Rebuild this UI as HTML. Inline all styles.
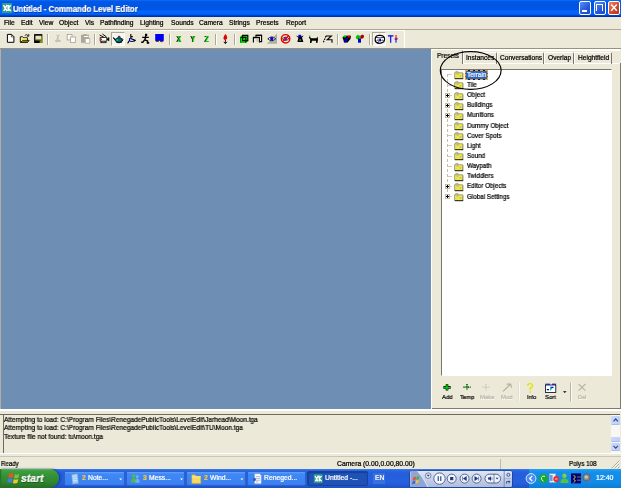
<!DOCTYPE html>
<html><head><meta charset="utf-8"><title>Untitled - Commando Level Editor</title>
<style>
html,body{margin:0;padding:0;}
body{width:622px;height:488px;overflow:hidden;background:#fff;position:relative;font-family:"Liberation Sans",sans-serif;font-size:7px;color:#000;}
.a{position:absolute;}
.t{position:absolute;white-space:nowrap;line-height:8px;height:8px;-webkit-text-stroke:0.22px currentColor;will-change:transform;}
svg{position:absolute;overflow:visible;}
#win{left:0;top:0;width:621px;height:469px;background:#ECE9D8;}
#title{left:0;top:0;width:621px;height:16.6px;background:linear-gradient(#1070f4 0,#0059ea 1.2px,#0055e2 5px,#0057e6 9.5px,#0066ff 11.5px,#0065fc 14px,#0048d0 15.2px,#0032b4 16.2px,#0030b0 16.6px);}
#ttext{left:13px;top:3.5px;font-size:8.4px;transform:scaleX(0.924);transform-origin:0 0;font-weight:bold;color:#fff;line-height:10px;height:10px;text-shadow:0.5px 0.5px 0 #0a2e8a;}
.cb{position:absolute;top:1.4px;width:12px;height:13.6px;border:0.8px solid #fff;border-radius:2px;box-sizing:border-box;background:linear-gradient(135deg,#5c8ff5,#2457d8 60%,#1c4cc8);}
#view{left:1px;top:49px;width:430px;height:360.5px;background:#6E8FB3;}
#task{left:0;top:469px;width:621px;height:19px;background:linear-gradient(#3a80f0 0,#2a68e4 1.5px,#245edc 4px,#2560de 14px,#1e50c4 19px);}
.m{top:18.5px;font-size:6.7px;}
.xyz{top:34.9px;font-size:8.2px;transform:scaleX(0.82);transform-origin:0 0;font-weight:bold;color:#00d400;text-shadow:-0.9px 0 0 #000;-webkit-text-stroke:0;line-height:9px;height:9px;}
.tab{top:51.6px;height:12px;box-sizing:border-box;border:1px solid #fff;border-right-color:#7a786c;border-bottom:0;border-radius:1.5px 1.5px 0 0;}
.tb{top:54.4px;font-size:6.6px;}
.tr{font-size:6.9px;transform:scaleX(0.91);transform-origin:0 0;}
.bl{top:393.3px;font-size:6.2px;transform:scaleX(0.95);transform-origin:0 0;}
.pl{width:5.4px;height:5.4px;box-sizing:border-box;border:0.8px solid #c0b8a0;background:#fff;}
.lg{font-size:7.2px;transform:scaleX(0.91);transform-origin:0 0;}
.st{top:460.3px;font-size:6.8px;transform-origin:0 0;}
.sb{width:9.2px;box-sizing:border-box;background:linear-gradient(90deg,#cad9fd,#bccffb);border-radius:1.2px;border-bottom:0.6px solid #a9bdf0;}
.tk{top:470.6px;height:15.6px;box-sizing:border-box;background:linear-gradient(#64a2fa 0,#4088f6 2px,#3c82f2 11px,#3478e8 15px);border:0.6px solid #2c62d0;border-radius:1.6px;}
.tt{top:474.4px;font-size:6.8px;color:#fff;}
.sep{position:absolute;top:34px;width:1px;height:10.5px;background:#ACA899;box-shadow:1px 0 0 #fff;}
</style></head><body>
<div class="a" id="win"></div>

<!-- TITLE BAR -->
<div class="a" id="title"></div>
<div class="a" style="left:1.5px;top:3px;width:10px;height:10px;background:#2f9a8e;"></div>
<svg style="left:1.5px;top:3px" width="10" height="10" viewBox="0 0 10 10"><path d="M1.5 2.2 L5 8 M5.2 1.8 L1.8 8 M6.2 2 V8 M6.2 5 L8.7 2.2 M6.2 5 L8.8 8" stroke="#fff" stroke-width="1.5" fill="none"/></svg>
<div class="t" id="ttext">Untitled - Commando Level Editor</div>
<div class="cb" style="left:579.4px;"></div>
<div class="a" style="left:582.4px;top:10.2px;width:4.4px;height:1.6px;background:#fff;"></div>
<div class="cb" style="left:593.7px;"></div>
<div class="a" style="left:595.8px;top:4.2px;width:7.4px;height:6.8px;box-sizing:border-box;border:1.1px solid #fff;border-top-width:1.9px;border-bottom:0;"></div>
<div class="cb" style="left:607.5px;background:linear-gradient(135deg,#e8896b,#d6482a 55%,#b93315);"></div>
<svg style="left:607.5px;top:1.4px" width="12" height="13.6" viewBox="0 0 12 13.6"><path d="M3.2 3.6 L8.8 9.8 M8.8 3.6 L3.2 9.8" stroke="#fff" stroke-width="1.5" fill="none"/></svg>

<!-- MENU BAR -->
<div class="t m" style="left:4px;">File</div>
<div class="t m" style="left:20.5px;">Edit</div>
<div class="t m" style="left:38.5px;">View</div>
<div class="t m" style="left:58.5px;">Object</div>
<div class="t m" style="left:85px;">Vis</div>
<div class="t m" style="left:100px;">Pathfinding</div>
<div class="t m" style="left:140px;">Lighting</div>
<div class="t m" style="left:170.5px;">Sounds</div>
<div class="t m" style="left:199px;">Camera</div>
<div class="t m" style="left:228.5px;">Strings</div>
<div class="t m" style="left:256px;">Presets</div>
<div class="t m" style="left:286px;">Report</div>
<div class="a" style="left:0;top:29px;width:621px;height:1px;background:#ACA899;"></div>
<div class="a" style="left:0;top:30px;width:404.5px;height:1px;background:#fff;"></div>

<!-- TOOLBAR -->
<div class="a" style="left:403.9px;top:30px;width:1px;height:18px;background:#fff;"></div>
<div class="a" style="left:0;top:48.2px;width:621px;height:1px;background:#97937f;"></div>
<div class="a" style="left:0;top:49px;width:1px;height:360px;background:#b4b09e;"></div>
<div class="sep" style="left:47px;"></div>
<div class="sep" style="left:93.5px;"></div>
<div class="sep" style="left:168.5px;"></div>
<div class="sep" style="left:215px;"></div>
<div class="sep" style="left:234px;"></div>
<div class="sep" style="left:337px;"></div>
<div class="sep" style="left:369px;"></div>


<div class="a" style="left:111px;top:32px;width:13.5px;height:13.7px;box-sizing:border-box;background:#F7F5EE;border:0.8px solid #fff;border-top-color:#ACA899;border-left-color:#ACA899;"></div>
<div class="a" style="left:372px;top:32px;width:14px;height:13.7px;box-sizing:border-box;background:#F7F5EE;border:0.8px solid #fff;border-top-color:#ACA899;border-left-color:#ACA899;"></div>
<svg style="left:0;top:30px" width="410" height="18" viewBox="0 30 410 18">
<!-- new -->
<path d="M7.4 34.4 H11.6 L13.9 36.7 V42.3 H7.4 Z" fill="#fff" stroke="#000" stroke-width="1"/>
<path d="M11.4 34.6 V36.9 H13.7" fill="none" stroke="#000" stroke-width="0.6"/>
<!-- open -->
<path d="M20.3 36.8 H22.8 L23.8 37.8 H27.4 V42.2 H20.3 Z" fill="#fffbb0" stroke="#000" stroke-width="0.9"/>
<path d="M21.2 38.2 H26.8 V39.8 H21.2 Z" fill="#f6f040"/>
<path d="M22.6 40.4 H29.2 L27.6 42.4 H20.6 Z" fill="#8a8a10" stroke="#000" stroke-width="0.7"/>
<path d="M24.8 35.4 Q26.6 33.8 28.2 35.6 M28.8 34 V36.2 H26.8" fill="none" stroke="#000" stroke-width="0.8"/>
<!-- save -->
<rect x="34.1" y="34.1" width="8.2" height="8.9" fill="#000"/>
<rect x="35.4" y="35.7" width="5.6" height="4" fill="#e6e2d0"/>
<rect x="41" y="35.7" width="1.3" height="7.3" fill="#8a8a10"/>
<rect x="35.4" y="39.6" width="5.6" height="0.9" fill="#8a8a10"/>
<rect x="39.6" y="40.5" width="1.4" height="2.5" fill="#8a8a10"/>
<!-- cut (disabled) -->
<path d="M57 34.8 L58.8 39.6 M59.2 34.8 L57.2 39.6" stroke="#ACA899" stroke-width="0.9" fill="none"/>
<circle cx="56.6" cy="41" r="1" fill="none" stroke="#ACA899" stroke-width="0.8"/>
<circle cx="59.4" cy="41" r="1" fill="none" stroke="#ACA899" stroke-width="0.8"/>
<path d="M57.8 35.4 L59.6 40.2 M57.4 42.4 L60.4 42.6" stroke="#fff" stroke-width="0.5" fill="none"/>
<!-- copy (disabled) -->
<rect x="67.2" y="34.5" width="4.8" height="5.4" fill="#fff" stroke="#ACA899" stroke-width="0.9"/>
<rect x="70.4" y="37" width="5" height="5.4" fill="#fff" stroke="#ACA899" stroke-width="0.9"/>
<!-- paste (disabled) -->
<rect x="81" y="34.8" width="8" height="8" fill="#ACA899"/>
<rect x="83.6" y="34" width="3" height="1.6" fill="#ACA899"/>
<rect x="85.2" y="38.6" width="4.6" height="4.6" fill="#fff" stroke="#ACA899" stroke-width="0.8"/>
<rect x="84" y="36" width="4.5" height="1" fill="#fff"/>
<!-- camera -->
<path d="M100.2 37.4 H106.8 V41.2 H100.2 Z" fill="#fff" stroke="#000" stroke-width="0.85"/>
<path d="M106.8 39.2 L109 37.4 V41 Z" fill="#000" stroke="#000" stroke-width="0.5"/>
<path d="M99.6 35 L103.6 37 M102.4 34 L106.4 36.8" stroke="#000" stroke-width="0.9"/>
<path d="M101.6 41.2 L100.8 42.8 M105 41.2 L106 42.8 M100.6 42.6 H106.4" stroke="#000" stroke-width="0.8"/>
<rect x="100.6" y="38.6" width="1.4" height="1.4" fill="#f00"/>
<!-- teapot -->
<path d="M113.4 37.8 L116 40.2 L115.8 38.8 Q119 37 122 38.8 L122 41.4 Q119 43.2 116.2 41.8 L115.6 41 Z" fill="#007474" stroke="#001818" stroke-width="0.8"/>
<path d="M113.2 37.6 L115.8 40.2" stroke="#000" stroke-width="0.9"/>
<path d="M117.4 37.4 H120.8 L119 35.8 Z" fill="#102a8a" stroke="#000" stroke-width="0.4"/>
<path d="M122 38.4 Q124 39.8 122 41.2" fill="none" stroke="#000" stroke-width="0.9"/>
<path d="M116 42 Q119 43.6 122 42" fill="none" stroke="#000" stroke-width="0.9"/>
<rect x="116.4" y="39.4" width="1.6" height="1.2" fill="#00e0e0"/>
<!-- wheelchair -->
<path d="M130.8 34 V38.6 L135.8 40.4 M130.8 36.6 H132.8 M129.6 40.2 L127.6 43.4 M134 40.2 V42" stroke="#000" stroke-width="1.1" fill="none"/>
<path d="M129.6 38 V40.8 Q130 41.6 133.2 41.4" stroke="#0000c8" stroke-width="1.1" fill="none"/>
<!-- running man -->
<rect x="145" y="33.8" width="2.2" height="2.2" fill="#000"/>
<path d="M142.2 37.4 H148.8 M145.8 36 L144.8 40 M144.8 39.8 L147.6 41 V43.4 M144.8 39.6 L142.8 42.2 H141.2" stroke="#000" stroke-width="1.4" fill="none"/>
<rect x="146.8" y="42" width="2.4" height="1.7" fill="#000"/>
<!-- blue bubble -->
<rect x="154.6" y="33.6" width="9.4" height="7" fill="#faf6d8"/>
<path d="M155.2 34 H163.8 V40.2 L162.6 41.2 H160.6 L159.4 40.2 L158 41.2 H156.6 L155.2 40.2 Z" fill="#0000f0"/>
<path d="M155.2 40.4 L156.4 41.4 H158 L159.4 40.6 L160.6 41.6 H162.6 L163.8 40.6" stroke="#000" stroke-width="0.7" fill="none"/>
<!-- red figure -->
<path d="M225.6 34 Q223 36.4 223.4 38.4 Q224 40 225.4 40 Q227.4 39.6 227.2 37.6 Q227 35.6 225.6 34 Z" fill="#e00000"/>
<path d="M225.4 40 V43.6 M223.8 41.8 L225.4 43.6 L227 41.8" stroke="#000" stroke-width="0.9" fill="none"/>
<!-- green cube -->
<path d="M240 37 L242 35 H248.2 V41 L246.2 43 H240 Z" fill="#00e000"/>
<path d="M242.6 35.4 H247.8 V40.6 H242.6 Z M240.6 37.4 H245.8 V42.4" stroke="#000" stroke-width="1.1" fill="none"/>
<path d="M240.6 37.4 V42.6" stroke="#004000" stroke-width="0.6" fill="none"/>
<!-- windows -->
<path d="M256 37 V35.4 H261.6 V41.6 H259.6" stroke="#000" stroke-width="1.1" fill="none"/>
<path d="M253.4 42.6 V37.6 H259.4 V42.6" stroke="#000" stroke-width="1.1" fill="none"/>
<rect x="253" y="36.8" width="6.8" height="1.2" fill="#000"/>
<rect x="255.8" y="34.8" width="6.2" height="1.2" fill="#000"/>
<rect x="256.4" y="38.6" width="2.4" height="3" fill="#c8c4b4"/>
<!-- eye on gray -->
<path d="M277 33.6 V43.8 H266.8 Z" fill="#b2ae9e"/>
<ellipse cx="271.8" cy="38.8" rx="4" ry="2.2" fill="#fff"/>
<path d="M267.8 38.8 Q271.8 35 275.8 38.8 M267.8 38.8 Q271.8 42.6 275.8 38.8" stroke="#000" stroke-width="0.9" fill="none"/>
<circle cx="271.8" cy="38.8" r="1.7" fill="#0000f0"/>
<!-- no sign -->
<ellipse cx="285.6" cy="38.8" rx="3.2" ry="2" fill="#fff"/>
<path d="M282.4 38.8 Q285.6 35.6 288.8 38.8 M282.4 38.8 Q285.6 42 288.8 38.8" stroke="#000" stroke-width="0.8" fill="none"/>
<circle cx="285.6" cy="38.8" r="1.4" fill="#0000f0"/>
<circle cx="285.6" cy="38.8" r="4.2" fill="none" stroke="#f00000" stroke-width="1.4"/>
<path d="M288.6 35.8 L282.6 41.8" stroke="#f00000" stroke-width="1.3"/>
<!-- hourglass black/blue -->
<path d="M295.8 35.4 L298.4 37.8 L297.4 42 H303.4 L302 37.8 L303.6 35.4 L301.2 36.6 H298.2 Z" fill="#000"/>
<rect x="298.4" y="34.8" width="2.8" height="2.2" fill="#0000f0"/>
<rect x="299.4" y="39.4" width="1.6" height="1.2" fill="#999"/>
<!-- dog -->
<path d="M309.6 36.6 L311 38.2 H316.4 L317.6 36.6 L318 39.4 L317.4 43 H316.2 L316 40.8 H312 L311.4 43 H310 L310.2 39.6 L308.8 37.6 Z" fill="#000"/>
<rect x="309" y="35.6" width="1.4" height="1.2" fill="#00d000"/>
<!-- path -->
<path d="M326 36 H331.4 L327.2 39.8 H332 V42.8" stroke="#000" stroke-width="1.1" fill="none"/>
<path d="M326 36 L323.2 42.8" stroke="#000" stroke-width="1.2" stroke-dasharray="1.6 1" fill="none"/>
<!-- cube thing -->
<path d="M342.4 37.4 L344.4 35.8 H351 L350.6 38.8 L347.6 42.4 H344 L343.4 40 Z" fill="#000"/>
<rect x="343.6" y="35.6" width="2.6" height="1.8" fill="#00d000"/>
<rect x="347.6" y="35.6" width="2.6" height="2" fill="#e00000"/>
<rect x="344.4" y="39.4" width="2.4" height="3" fill="#0000f0"/>
<rect x="346" y="37.6" width="2" height="2" fill="#0000c0"/>
<!-- tree thing -->
<path d="M355.8 36.6 L357.8 34.8 L360.4 36 L360 38.6 L358 39.6 L356 38.6 Z" fill="#00c800"/>
<path d="M360.4 35.8 L362.4 34.6 L364.2 35.8 L363.4 38.2 L361.2 38.8 L360.2 37.6 Z" fill="#a80000"/>
<rect x="358" y="38.8" width="3" height="3.9" fill="#0000f0"/>
<path d="M359.4 39.2 L358.4 38 M359.8 39.2 L361.4 38" stroke="#000" stroke-width="0.6"/>
<!-- pressed glyph -->
<path d="M375.6 37 Q377 35 380 35.4 Q383.4 35.2 384.4 37.6 Q385 40 383.8 41.8 Q381 43.8 377.8 43.2 Q374.8 42.2 375.2 39.4 Z" fill="#fff" stroke="#000" stroke-width="1.2"/>
<path d="M376 37.4 Q380 38.6 384 37.2 M376.4 41 Q378 39 379.4 40.4 M381.4 40.4 Q382.8 39.2 383.6 41" stroke="#000" stroke-width="0.8" fill="none"/>
<path d="M377 43 L379 41.6" stroke="#000" stroke-width="1"/>
<rect x="379.2" y="38.8" width="1.8" height="2.6" fill="#0000e0"/>
<!-- T+ -->
<path d="M388 35.8 H393.4 M390.7 35.8 V42.7" stroke="#0000f0" stroke-width="1.15" fill="none"/>
<path d="M396 38.6 V42.7 M394.6 39 H397.6" stroke="#0000f0" stroke-width="1" fill="none"/>
<path d="M396 35 V38.6 M395.4 38.2 H397.4" stroke="#f00000" stroke-width="1" fill="none"/>
</svg>
<div class="t xyz" style="left:176.6px;">X</div>
<div class="t xyz" style="left:190.6px;">Y</div>
<div class="t xyz" style="left:204.6px;">Z</div>

<!-- VIEWPORT -->
<div class="a" id="view"></div>


<!-- RIGHT PANEL -->
<div class="a" style="left:431px;top:49.2px;width:189px;height:1.6px;background:#fff;"></div>
<div class="a" style="left:431.2px;top:49px;width:1.2px;height:360px;background:#fff;"></div>
<div class="a" style="left:432.4px;top:408px;width:188.6px;height:1px;background:#7e7b6e;"></div>
<div class="a" style="left:619.6px;top:63.4px;width:1px;height:345.6px;background:#7e7b6e;"></div>
<!-- tab page -->
<div class="a" style="left:432.4px;top:63px;width:187.4px;height:345px;box-sizing:border-box;border:1px solid transparent;border-top-color:#fff;"></div>
<!-- tabs -->
<div class="a tab" style="left:462.5px;width:34.5px;"></div>
<div class="a tab" style="left:497px;width:47px;"></div>
<div class="a tab" style="left:544px;width:29.5px;"></div>
<div class="a tab" style="left:573.5px;width:38px;"></div>
<div class="a tab" style="left:432.4px;width:30.4px;top:50.4px;height:13.8px;border-bottom:0;border-left:0;border-top:0;background:#ECE9D8;"></div>
<div class="t tb" style="left:436.8px;top:52.2px;font-size:7.4px;transform:scaleX(0.88);transform-origin:0 0;">Presets</div>
<div class="t tb" style="left:466px;">Instances</div>
<div class="t tb" style="left:500px;">Conversations</div>
<div class="t tb" style="left:548px;">Overlap</div>
<div class="t tb" style="left:577.5px;">Heightfield</div>
<!-- tree box -->
<div class="a" style="left:441px;top:68.6px;width:171px;height:307.4px;box-sizing:border-box;background:#fff;border:1px solid #fff;border-top-color:#7a786c;border-left-color:#7a786c;"></div>
<div class="a" style="left:447.4px;top:73.9px;width:0;height:122.8px;border-left:1px dashed #c4bea8;"></div>
<div class="a" style="left:448.4px;top:74.4px;width:3.6px;height:1px;background:#cfc9b6;"></div>
<svg style="left:453.8px;top:71.2px" width="9.4" height="8.2" viewBox="0 0 9.4 8.2"><path d="M1.2 1.6 L1.8 0.4 H4 L4.8 1.6 Z" fill="#f2ea2a"/><rect x="0.6" y="1.6" width="8.2" height="6" fill="#f6ee24"/><rect x="2.6" y="2.2" width="2" height="1.8" fill="#b8b8d0"/><rect x="5.4" y="4" width="2" height="1.8" fill="#b8b8d0"/><rect x="1.4" y="4.6" width="1.6" height="1.6" fill="#c8c8dc"/><path d="M0.6 7.6 V1.8 H8.8" stroke="#8a8a8a" stroke-width="0.8" fill="none"/><path d="M1.2 1.6 L1.8 0.4 H4 L4.8 1.6" stroke="#8a8a8a" stroke-width="0.6" fill="none"/><path d="M8.9 2.2 V7.6" stroke="#5a5a5a" stroke-width="0.8" fill="none"/><path d="M0.8 7.7 H9.2" stroke="#111" stroke-width="1" fill="none"/></svg>
<div class="a" style="left:465.3px;top:69.9px;width:22.6px;height:9.9px;box-sizing:border-box;background:#2c67c8;border:1px solid #1c1a18;"></div><div class="a" style="left:465.3px;top:69.9px;width:22.6px;height:9.9px;box-sizing:border-box;border:1px dashed #f0a236;"></div>
<div class="t tr" style="left:467px;top:70.7px;color:#fff;">Terrain</div>
<div class="a" style="left:448.4px;top:84.6px;width:3.6px;height:1px;background:#cfc9b6;"></div>
<svg style="left:453.8px;top:81.4px" width="9.4" height="8.2" viewBox="0 0 9.4 8.2"><path d="M1.2 1.6 L1.8 0.4 H4 L4.8 1.6 Z" fill="#f2ea2a"/><rect x="0.6" y="1.6" width="8.2" height="6" fill="#f6ee24"/><rect x="2.6" y="2.2" width="2" height="1.8" fill="#b8b8d0"/><rect x="5.4" y="4" width="2" height="1.8" fill="#b8b8d0"/><rect x="1.4" y="4.6" width="1.6" height="1.6" fill="#c8c8dc"/><path d="M0.6 7.6 V1.8 H8.8" stroke="#8a8a8a" stroke-width="0.8" fill="none"/><path d="M1.2 1.6 L1.8 0.4 H4 L4.8 1.6" stroke="#8a8a8a" stroke-width="0.6" fill="none"/><path d="M8.9 2.2 V7.6" stroke="#5a5a5a" stroke-width="0.8" fill="none"/><path d="M0.8 7.7 H9.2" stroke="#111" stroke-width="1" fill="none"/></svg>
<div class="t tr" style="left:467px;top:80.9px;">Tile</div>
<div class="a" style="left:448.4px;top:94.7px;width:3.6px;height:1px;background:#cfc9b6;"></div>
<div class="a pl" style="left:445px;top:92.6px;"></div>
<div class="a" style="left:446.2px;top:94.6px;width:3.2px;height:1.1px;background:#000;"></div>
<div class="a" style="left:447.3px;top:93.6px;width:1.1px;height:3.2px;background:#000;"></div>
<svg style="left:453.8px;top:91.5px" width="9.4" height="8.2" viewBox="0 0 9.4 8.2"><path d="M1.2 1.6 L1.8 0.4 H4 L4.8 1.6 Z" fill="#f2ea2a"/><rect x="0.6" y="1.6" width="8.2" height="6" fill="#f6ee24"/><rect x="2.6" y="2.2" width="2" height="1.8" fill="#b8b8d0"/><rect x="5.4" y="4" width="2" height="1.8" fill="#b8b8d0"/><rect x="1.4" y="4.6" width="1.6" height="1.6" fill="#c8c8dc"/><path d="M0.6 7.6 V1.8 H8.8" stroke="#8a8a8a" stroke-width="0.8" fill="none"/><path d="M1.2 1.6 L1.8 0.4 H4 L4.8 1.6" stroke="#8a8a8a" stroke-width="0.6" fill="none"/><path d="M8.9 2.2 V7.6" stroke="#5a5a5a" stroke-width="0.8" fill="none"/><path d="M0.8 7.7 H9.2" stroke="#111" stroke-width="1" fill="none"/></svg>
<div class="t tr" style="left:467px;top:91.0px;">Object</div>
<div class="a" style="left:448.4px;top:104.9px;width:3.6px;height:1px;background:#cfc9b6;"></div>
<div class="a pl" style="left:445px;top:102.8px;"></div>
<div class="a" style="left:446.2px;top:104.8px;width:3.2px;height:1.1px;background:#000;"></div>
<div class="a" style="left:447.3px;top:103.8px;width:1.1px;height:3.2px;background:#000;"></div>
<svg style="left:453.8px;top:101.7px" width="9.4" height="8.2" viewBox="0 0 9.4 8.2"><path d="M1.2 1.6 L1.8 0.4 H4 L4.8 1.6 Z" fill="#f2ea2a"/><rect x="0.6" y="1.6" width="8.2" height="6" fill="#f6ee24"/><rect x="2.6" y="2.2" width="2" height="1.8" fill="#b8b8d0"/><rect x="5.4" y="4" width="2" height="1.8" fill="#b8b8d0"/><rect x="1.4" y="4.6" width="1.6" height="1.6" fill="#c8c8dc"/><path d="M0.6 7.6 V1.8 H8.8" stroke="#8a8a8a" stroke-width="0.8" fill="none"/><path d="M1.2 1.6 L1.8 0.4 H4 L4.8 1.6" stroke="#8a8a8a" stroke-width="0.6" fill="none"/><path d="M8.9 2.2 V7.6" stroke="#5a5a5a" stroke-width="0.8" fill="none"/><path d="M0.8 7.7 H9.2" stroke="#111" stroke-width="1" fill="none"/></svg>
<div class="t tr" style="left:467px;top:101.2px;">Buildings</div>
<div class="a" style="left:448.4px;top:115.0px;width:3.6px;height:1px;background:#cfc9b6;"></div>
<div class="a pl" style="left:445px;top:112.9px;"></div>
<div class="a" style="left:446.2px;top:114.9px;width:3.2px;height:1.1px;background:#000;"></div>
<div class="a" style="left:447.3px;top:113.9px;width:1.1px;height:3.2px;background:#000;"></div>
<svg style="left:453.8px;top:111.8px" width="9.4" height="8.2" viewBox="0 0 9.4 8.2"><path d="M1.2 1.6 L1.8 0.4 H4 L4.8 1.6 Z" fill="#f2ea2a"/><rect x="0.6" y="1.6" width="8.2" height="6" fill="#f6ee24"/><rect x="2.6" y="2.2" width="2" height="1.8" fill="#b8b8d0"/><rect x="5.4" y="4" width="2" height="1.8" fill="#b8b8d0"/><rect x="1.4" y="4.6" width="1.6" height="1.6" fill="#c8c8dc"/><path d="M0.6 7.6 V1.8 H8.8" stroke="#8a8a8a" stroke-width="0.8" fill="none"/><path d="M1.2 1.6 L1.8 0.4 H4 L4.8 1.6" stroke="#8a8a8a" stroke-width="0.6" fill="none"/><path d="M8.9 2.2 V7.6" stroke="#5a5a5a" stroke-width="0.8" fill="none"/><path d="M0.8 7.7 H9.2" stroke="#111" stroke-width="1" fill="none"/></svg>
<div class="t tr" style="left:467px;top:111.3px;">Munitions</div>
<div class="a" style="left:448.4px;top:125.2px;width:3.6px;height:1px;background:#cfc9b6;"></div>
<svg style="left:453.8px;top:122.0px" width="9.4" height="8.2" viewBox="0 0 9.4 8.2"><path d="M1.2 1.6 L1.8 0.4 H4 L4.8 1.6 Z" fill="#f2ea2a"/><rect x="0.6" y="1.6" width="8.2" height="6" fill="#f6ee24"/><rect x="2.6" y="2.2" width="2" height="1.8" fill="#b8b8d0"/><rect x="5.4" y="4" width="2" height="1.8" fill="#b8b8d0"/><rect x="1.4" y="4.6" width="1.6" height="1.6" fill="#c8c8dc"/><path d="M0.6 7.6 V1.8 H8.8" stroke="#8a8a8a" stroke-width="0.8" fill="none"/><path d="M1.2 1.6 L1.8 0.4 H4 L4.8 1.6" stroke="#8a8a8a" stroke-width="0.6" fill="none"/><path d="M8.9 2.2 V7.6" stroke="#5a5a5a" stroke-width="0.8" fill="none"/><path d="M0.8 7.7 H9.2" stroke="#111" stroke-width="1" fill="none"/></svg>
<div class="t tr" style="left:467px;top:121.5px;">Dummy Object</div>
<div class="a" style="left:448.4px;top:135.3px;width:3.6px;height:1px;background:#cfc9b6;"></div>
<svg style="left:453.8px;top:132.1px" width="9.4" height="8.2" viewBox="0 0 9.4 8.2"><path d="M1.2 1.6 L1.8 0.4 H4 L4.8 1.6 Z" fill="#f2ea2a"/><rect x="0.6" y="1.6" width="8.2" height="6" fill="#f6ee24"/><rect x="2.6" y="2.2" width="2" height="1.8" fill="#b8b8d0"/><rect x="5.4" y="4" width="2" height="1.8" fill="#b8b8d0"/><rect x="1.4" y="4.6" width="1.6" height="1.6" fill="#c8c8dc"/><path d="M0.6 7.6 V1.8 H8.8" stroke="#8a8a8a" stroke-width="0.8" fill="none"/><path d="M1.2 1.6 L1.8 0.4 H4 L4.8 1.6" stroke="#8a8a8a" stroke-width="0.6" fill="none"/><path d="M8.9 2.2 V7.6" stroke="#5a5a5a" stroke-width="0.8" fill="none"/><path d="M0.8 7.7 H9.2" stroke="#111" stroke-width="1" fill="none"/></svg>
<div class="t tr" style="left:467px;top:131.6px;">Cover Spots</div>
<div class="a" style="left:448.4px;top:145.4px;width:3.6px;height:1px;background:#cfc9b6;"></div>
<svg style="left:453.8px;top:142.2px" width="9.4" height="8.2" viewBox="0 0 9.4 8.2"><path d="M1.2 1.6 L1.8 0.4 H4 L4.8 1.6 Z" fill="#f2ea2a"/><rect x="0.6" y="1.6" width="8.2" height="6" fill="#f6ee24"/><rect x="2.6" y="2.2" width="2" height="1.8" fill="#b8b8d0"/><rect x="5.4" y="4" width="2" height="1.8" fill="#b8b8d0"/><rect x="1.4" y="4.6" width="1.6" height="1.6" fill="#c8c8dc"/><path d="M0.6 7.6 V1.8 H8.8" stroke="#8a8a8a" stroke-width="0.8" fill="none"/><path d="M1.2 1.6 L1.8 0.4 H4 L4.8 1.6" stroke="#8a8a8a" stroke-width="0.6" fill="none"/><path d="M8.9 2.2 V7.6" stroke="#5a5a5a" stroke-width="0.8" fill="none"/><path d="M0.8 7.7 H9.2" stroke="#111" stroke-width="1" fill="none"/></svg>
<div class="t tr" style="left:467px;top:141.8px;">Light</div>
<div class="a" style="left:448.4px;top:155.6px;width:3.6px;height:1px;background:#cfc9b6;"></div>
<svg style="left:453.8px;top:152.4px" width="9.4" height="8.2" viewBox="0 0 9.4 8.2"><path d="M1.2 1.6 L1.8 0.4 H4 L4.8 1.6 Z" fill="#f2ea2a"/><rect x="0.6" y="1.6" width="8.2" height="6" fill="#f6ee24"/><rect x="2.6" y="2.2" width="2" height="1.8" fill="#b8b8d0"/><rect x="5.4" y="4" width="2" height="1.8" fill="#b8b8d0"/><rect x="1.4" y="4.6" width="1.6" height="1.6" fill="#c8c8dc"/><path d="M0.6 7.6 V1.8 H8.8" stroke="#8a8a8a" stroke-width="0.8" fill="none"/><path d="M1.2 1.6 L1.8 0.4 H4 L4.8 1.6" stroke="#8a8a8a" stroke-width="0.6" fill="none"/><path d="M8.9 2.2 V7.6" stroke="#5a5a5a" stroke-width="0.8" fill="none"/><path d="M0.8 7.7 H9.2" stroke="#111" stroke-width="1" fill="none"/></svg>
<div class="t tr" style="left:467px;top:151.9px;">Sound</div>
<div class="a" style="left:448.4px;top:165.8px;width:3.6px;height:1px;background:#cfc9b6;"></div>
<svg style="left:453.8px;top:162.6px" width="9.4" height="8.2" viewBox="0 0 9.4 8.2"><path d="M1.2 1.6 L1.8 0.4 H4 L4.8 1.6 Z" fill="#f2ea2a"/><rect x="0.6" y="1.6" width="8.2" height="6" fill="#f6ee24"/><rect x="2.6" y="2.2" width="2" height="1.8" fill="#b8b8d0"/><rect x="5.4" y="4" width="2" height="1.8" fill="#b8b8d0"/><rect x="1.4" y="4.6" width="1.6" height="1.6" fill="#c8c8dc"/><path d="M0.6 7.6 V1.8 H8.8" stroke="#8a8a8a" stroke-width="0.8" fill="none"/><path d="M1.2 1.6 L1.8 0.4 H4 L4.8 1.6" stroke="#8a8a8a" stroke-width="0.6" fill="none"/><path d="M8.9 2.2 V7.6" stroke="#5a5a5a" stroke-width="0.8" fill="none"/><path d="M0.8 7.7 H9.2" stroke="#111" stroke-width="1" fill="none"/></svg>
<div class="t tr" style="left:467px;top:162.1px;">Waypath</div>
<div class="a" style="left:448.4px;top:175.9px;width:3.6px;height:1px;background:#cfc9b6;"></div>
<svg style="left:453.8px;top:172.7px" width="9.4" height="8.2" viewBox="0 0 9.4 8.2"><path d="M1.2 1.6 L1.8 0.4 H4 L4.8 1.6 Z" fill="#f2ea2a"/><rect x="0.6" y="1.6" width="8.2" height="6" fill="#f6ee24"/><rect x="2.6" y="2.2" width="2" height="1.8" fill="#b8b8d0"/><rect x="5.4" y="4" width="2" height="1.8" fill="#b8b8d0"/><rect x="1.4" y="4.6" width="1.6" height="1.6" fill="#c8c8dc"/><path d="M0.6 7.6 V1.8 H8.8" stroke="#8a8a8a" stroke-width="0.8" fill="none"/><path d="M1.2 1.6 L1.8 0.4 H4 L4.8 1.6" stroke="#8a8a8a" stroke-width="0.6" fill="none"/><path d="M8.9 2.2 V7.6" stroke="#5a5a5a" stroke-width="0.8" fill="none"/><path d="M0.8 7.7 H9.2" stroke="#111" stroke-width="1" fill="none"/></svg>
<div class="t tr" style="left:467px;top:172.2px;">Twiddlers</div>
<div class="a" style="left:448.4px;top:186.1px;width:3.6px;height:1px;background:#cfc9b6;"></div>
<div class="a pl" style="left:445px;top:184.0px;"></div>
<div class="a" style="left:446.2px;top:186.0px;width:3.2px;height:1.1px;background:#000;"></div>
<div class="a" style="left:447.3px;top:185.0px;width:1.1px;height:3.2px;background:#000;"></div>
<svg style="left:453.8px;top:182.9px" width="9.4" height="8.2" viewBox="0 0 9.4 8.2"><path d="M1.2 1.6 L1.8 0.4 H4 L4.8 1.6 Z" fill="#f2ea2a"/><rect x="0.6" y="1.6" width="8.2" height="6" fill="#f6ee24"/><rect x="2.6" y="2.2" width="2" height="1.8" fill="#b8b8d0"/><rect x="5.4" y="4" width="2" height="1.8" fill="#b8b8d0"/><rect x="1.4" y="4.6" width="1.6" height="1.6" fill="#c8c8dc"/><path d="M0.6 7.6 V1.8 H8.8" stroke="#8a8a8a" stroke-width="0.8" fill="none"/><path d="M1.2 1.6 L1.8 0.4 H4 L4.8 1.6" stroke="#8a8a8a" stroke-width="0.6" fill="none"/><path d="M8.9 2.2 V7.6" stroke="#5a5a5a" stroke-width="0.8" fill="none"/><path d="M0.8 7.7 H9.2" stroke="#111" stroke-width="1" fill="none"/></svg>
<div class="t tr" style="left:467px;top:182.4px;">Editor Objects</div>
<div class="a" style="left:448.4px;top:196.2px;width:3.6px;height:1px;background:#cfc9b6;"></div>
<div class="a pl" style="left:445px;top:194.1px;"></div>
<div class="a" style="left:446.2px;top:196.1px;width:3.2px;height:1.1px;background:#000;"></div>
<div class="a" style="left:447.3px;top:195.1px;width:1.1px;height:3.2px;background:#000;"></div>
<svg style="left:453.8px;top:193.0px" width="9.4" height="8.2" viewBox="0 0 9.4 8.2"><path d="M1.2 1.6 L1.8 0.4 H4 L4.8 1.6 Z" fill="#f2ea2a"/><rect x="0.6" y="1.6" width="8.2" height="6" fill="#f6ee24"/><rect x="2.6" y="2.2" width="2" height="1.8" fill="#b8b8d0"/><rect x="5.4" y="4" width="2" height="1.8" fill="#b8b8d0"/><rect x="1.4" y="4.6" width="1.6" height="1.6" fill="#c8c8dc"/><path d="M0.6 7.6 V1.8 H8.8" stroke="#8a8a8a" stroke-width="0.8" fill="none"/><path d="M1.2 1.6 L1.8 0.4 H4 L4.8 1.6" stroke="#8a8a8a" stroke-width="0.6" fill="none"/><path d="M8.9 2.2 V7.6" stroke="#5a5a5a" stroke-width="0.8" fill="none"/><path d="M0.8 7.7 H9.2" stroke="#111" stroke-width="1" fill="none"/></svg>
<div class="t tr" style="left:467px;top:192.5px;">Global Settings</div>
<!-- annotation ellipse -->
<svg style="left:430px;top:44px" width="90" height="60" viewBox="430 44 90 60"><ellipse cx="470.7" cy="70.5" rx="30.4" ry="18.9" fill="none" stroke="#000" stroke-width="1.15"/></svg>
<!-- bottom buttons -->
<svg style="left:436px;top:380px" width="180" height="24" viewBox="436 380 180 24">
<path d="M447 384.2 V390.6 M443.4 387.4 H450.6" stroke="#000" stroke-width="2.6" fill="none"/>
<path d="M447 384.8 V390 M444 387.4 H450" stroke="#00d000" stroke-width="1.5" fill="none"/>
<path d="M467 384 V390.4 M463.4 387.2 H470.6" stroke="#000" stroke-width="1.2" stroke-dasharray="1.2 1" fill="none"/>
<path d="M467 385 V389.6 M464.4 387.2 H469.6" stroke="#00d000" stroke-width="1" stroke-dasharray="1.4 0.9" fill="none"/>
<path d="M486 384 V390.4 M482.4 387.2 H489.6" stroke="#c4c0b0" stroke-width="1.2" stroke-dasharray="1 1" fill="none"/>
<path d="M503 391.4 L510 384.6 M506.6 384.2 H510.6 L511.6 387.6" stroke="#b4b0a0" stroke-width="1.2" fill="none"/>
<path d="M519.5 382.5 V401" stroke="#fff" stroke-width="1"/>
<path d="M518.7 382.5 V401" stroke="#d8d4c4" stroke-width="0.6"/>
<path d="M527.6 385.8 Q527.6 383.6 530 383.6 Q532.6 383.6 532.6 385.6 Q532.6 387 530.2 388.4 V390" stroke="#e8e000" stroke-width="1.4" fill="none"/>
<rect x="529.4" y="391.2" width="1.6" height="1.6" fill="#e8e000"/>
<rect x="545.4" y="385" width="10.4" height="7.4" fill="#fff" stroke="#000" stroke-width="0.8"/>
<path d="M545.4 384.2 H550 M552 384.2 H556" stroke="#0000d0" stroke-width="1" fill="none"/>
<path d="M546.8 389.6 H549 M550.4 387.4 H553.4" stroke="#0000d0" stroke-width="1.2" fill="none"/>
<path d="M550 386.6 L552.6 388.6 L550 390.8 Z" fill="#00c0e0"/>
<path d="M563 391.2 H566.6 L564.8 393 Z" fill="#000"/>
<path d="M570.5 382.5 V401.6" stroke="#ACA899" stroke-width="0.9"/>
<path d="M571.4 382.5 V401.6" stroke="#fff" stroke-width="0.8"/>
<path d="M578.6 384 L585.4 390.6 M585.4 384 L578.6 390.6" stroke="#b8b4a4" stroke-width="1.1" fill="none"/>
</svg>
<div class="t bl" style="left:442.2px;">Add</div>
<div class="t bl" style="left:460.4px;">Temp</div>
<div class="t bl" style="left:480px;color:#b8b4a4;text-shadow:0.5px 0.5px 0 #fff;">Make</div>
<div class="t bl" style="left:500.8px;color:#b8b4a4;text-shadow:0.5px 0.5px 0 #fff;">Mod</div>
<div class="t bl" style="left:526.6px;transform:scaleX(0.88);">Info</div>
<div class="t bl" style="left:544.6px;">Sort</div>
<div class="t bl" style="left:578px;color:#b8b4a4;text-shadow:0.5px 0.5px 0 #fff;transform:scaleX(0.9);">Del</div>


<!-- LOG -->
<div class="a" style="left:0;top:409.4px;width:621px;height:1.6px;background:#fff;"></div>
<div class="a" style="left:0;top:414px;width:619.8px;height:1px;background:#6e6b5e;"></div>
<div class="a" style="left:2.8px;top:414px;width:1px;height:39px;background:#6e6b5e;"></div>
<div class="a" style="left:0;top:453.2px;width:621px;height:1px;background:#fff;"></div>
<div class="t lg" style="left:4.2px;top:415.9px;">Attempting to load: C:\Program Files\RenegadePublicTools\LevelEdit\Jarhead\Moon.tga</div>
<div class="t lg" style="left:4.2px;top:424.2px;">Attempting to load: C:\Program Files\RenegadePublicTools\LevelEdit\TU\Moon.tga</div>
<div class="t lg" style="left:4.2px;top:432.5px;">Texture file not found: tu\moon.tga</div>
<!-- log scrollbar -->
<div class="a" style="left:610.5px;top:415.4px;width:9.2px;height:37.4px;background:#f8f7f2;"></div>
<div class="a sb" style="left:610.5px;top:416px;height:8.8px;"></div>
<div class="a sb" style="left:610.5px;top:437.4px;height:4.4px;"></div>
<div class="a sb" style="left:610.5px;top:442.6px;height:8.8px;"></div>
<svg style="left:610.5px;top:415px" width="10" height="38" viewBox="610.5 415 10 38">
<path d="M613 421.4 L615.2 419 L617.4 421.4" stroke="#3a4a7a" stroke-width="1.2" fill="none"/>
<path d="M613 445.8 L615.2 448.2 L617.4 445.8" stroke="#3a4a7a" stroke-width="1.2" fill="none"/>
</svg>
<!-- STATUS BAR -->
<div class="a" style="left:0;top:456.2px;width:621px;height:1px;background:#c8c5b4;"></div>
<div class="t st" style="left:1.2px;transform:scaleX(0.9);">Ready</div>
<div class="t st" style="left:337.4px;">Camera (0.00,0.00,80.00)</div>
<div class="t st" style="left:569.2px;transform:scaleX(0.926);">Polys 108</div>
<div class="a" style="left:499.6px;top:459px;width:1px;height:10px;background:#c0bcac;"></div>
<svg style="left:610px;top:459px" width="10" height="10" viewBox="0 0 10 10"><path d="M9.4 1.6 L1.6 9.4 M9.4 4.6 L4.6 9.4 M9.4 7.6 L7.6 9.4" stroke="#b0ac9c" stroke-width="1" fill="none"/><path d="M9.4 2.8 L2.8 9.4 M9.4 5.8 L5.8 9.4" stroke="#fff" stroke-width="0.6" fill="none"/></svg>


<!-- TASKBAR -->
<div class="a" id="task"></div>
<!-- start button -->
<div class="a" style="left:0;top:469px;width:58.5px;height:19px;border-radius:0 9px 10px 0/0 9px 10px 0;background:linear-gradient(#66bc66 0,#3f9f3f 1.6px,#369136 7px,#2f862f 13px,#266c26 19px);box-shadow:1.5px 0 2px #1a3f9a, inset 1.2px 0 1px #2a742a;"></div>
<svg style="left:6.6px;top:472.4px" width="12.6" height="12.6" viewBox="-0.4 0 11.6 11.6">
<path d="M1.6 1.8 Q3.6 0.4 5.8 1.6 L5 5.2 Q3 4.2 0.8 5.4 Z" fill="#e8532c"/>
<path d="M6.8 2 Q8.8 3 11 1.8 L10.2 5.4 Q8 6.6 6 5.6 Z" fill="#7ac143"/>
<path d="M0.6 6.4 Q2.8 5.2 4.8 6.2 L4 9.8 Q2 8.8 -0.2 10 Z" fill="#3f7fe8"/>
<path d="M5.8 6.6 Q7.8 7.6 10 6.4 L9.2 10 Q7 11.2 5 10.2 Z" fill="#f4c52c"/>
</svg>
<div class="t" style="left:20.8px;top:471.6px;font-size:10.8px;font-weight:bold;font-style:italic;color:#fff;line-height:13px;height:13px;text-shadow:0.6px 0.8px 1px #1c4a1c;transform:scaleX(0.97);transform-origin:0 0;">start</div>
<!-- task buttons -->
<div class="a tk" style="left:64.4px;width:60.2px;"></div>
<div class="a tk" style="left:126px;width:58.8px;"></div>
<div class="a tk" style="left:186px;width:59.6px;"></div>
<div class="a tk" style="left:247px;width:58.6px;"></div>
<div class="a tk" style="left:306.6px;width:61.6px;background:#1e52b7;border-color:#17429a;box-shadow:inset 0.6px 0.8px 1px #143a8a;"></div>
<svg style="left:60px;top:469px" width="320" height="19" viewBox="60 469 320 19">
<!-- notepad icon -->
<path d="M71.4 474.4 L77.6 473.4 L78.6 483.4 L72.4 484.2 Z" fill="#9ccdf2" stroke="#5a8ccc" stroke-width="0.6"/>
<path d="M72.6 476.4 L77 475.8 M72.8 478.6 L77.2 478 M73 480.8 L77.4 480.2" stroke="#e8f4ff" stroke-width="0.6"/>
<!-- msn icon -->
<circle cx="133.6" cy="475.8" r="1.9" fill="#54b848"/>
<path d="M131 482.6 Q131 478 133.6 478 Q136.4 478 136.4 482.6 Z" fill="#54b848"/>
<circle cx="137.2" cy="476.6" r="1.6" fill="#6ab0f0"/>
<path d="M135.2 482.8 Q135.2 478.6 137.4 478.6 Q139.8 478.6 139.8 482.8 Z" fill="#6ab0f0"/>
<!-- folder icon -->
<path d="M191.8 474.8 H195 L196 476 H200.8 V483.4 H191.8 Z" fill="#f8d860" stroke="#c8a030" stroke-width="0.5"/>
<path d="M191.8 477 H200.8" stroke="#fff4b0" stroke-width="0.7"/>
<!-- doc icon -->
<path d="M254.6 473.8 H259.6 L261.2 475.4 V483.8 H254.6 Z" fill="#fff" stroke="#8aa0c8" stroke-width="0.5"/>
<path d="M255.8 476.6 H260 M255.8 478.4 H260 M255.8 480.2 H260 M255.8 482 H258.6" stroke="#6a86c0" stroke-width="0.6"/>
<circle cx="254.4" cy="479.4" r="1.6" fill="#2c5ccc"/>
<!-- level edit icon -->
<rect x="313.8" y="474.2" width="8.8" height="8.8" fill="#2f9a8e"/>
<path d="M315 475.8 L318 481.4 M318.4 475.6 L315.4 481.4 M319.2 475.8 V481.4 M319.2 478.6 L321.6 476 M319.2 478.6 L321.8 481.4" stroke="#fff" stroke-width="1.2" fill="none"/>
<!-- dropdown arrows -->
<path d="M119.2 478.6 H122.2 L120.7 480.2 Z M180 478.6 H183 L181.5 480.2 Z M240.4 478.6 H243.4 L241.9 480.2 Z" fill="#fff"/>
</svg>
<div class="t tt" style="left:81.6px;color:#ffc440;font-weight:bold;">2</div>
<div class="t tt" style="left:88px;">Note...</div>
<div class="t tt" style="left:142.8px;color:#ffc440;font-weight:bold;">3</div>
<div class="t tt" style="left:148.6px;">Mess...</div>
<div class="t tt" style="left:203.6px;color:#ffc440;font-weight:bold;">2</div>
<div class="t tt" style="left:210.4px;">Wind...</div>
<div class="t tt" style="left:263.6px;">Reneged...</div>
<div class="t tt" style="left:325px;">Untitled -...</div>
<!-- language -->
<div class="a" style="left:373.2px;top:472.6px;width:11.8px;height:11.6px;background:#3a70dc;"></div>
<div class="t tt" style="left:374.8px;">EN</div>
<!-- WMP toolbar -->
<div class="a" style="left:410.4px;top:470.6px;width:101.6px;height:16.4px;border-radius:1.5px;background:linear-gradient(#dfe6f4 0,#c8d3ea 45%,#aebcdc 100%);box-shadow:0 0 0 0.6px #20386e;"></div>
<svg style="left:410px;top:470px" width="104" height="18" viewBox="410 470 104 18">
<path d="M410.6 470.8 H417.4 Q423 477 428 487 H410.6 Z" fill="#93a5d6"/>
<path d="M417.4 470.8 Q423 477 428 487" stroke="#eef2fc" stroke-width="0.8" fill="none"/>
<path d="M413.2 477.6 L416 476.6 L415.6 479.8 L412.8 480.8 Z" fill="#e8532c"/>
<path d="M416.6 476.8 L419.4 476.2 L418.8 479.2 L416.2 479.8 Z" fill="#4cb038"/>
<path d="M412.6 481.4 L415.4 480.4 L415 483.4 L412.2 484.2 Z" fill="#2f6ad8"/>
<path d="M416 480.4 L418.8 479.8 L418.2 482.8 L415.6 483.4 Z" fill="#f4c52c"/>
<circle cx="428.2" cy="475.6" r="2.8" fill="#eef2fb" stroke="#55658f" stroke-width="0.8"/>
<path d="M426.6 474.8 H429.8 L428.2 476.8 Z" fill="#1c3a88"/>
<circle cx="439.5" cy="478.6" r="5.7" fill="#f4f7fd" stroke="#55658f" stroke-width="1"/>
<path d="M438.2 476.2 V481 M440.8 476.2 V481" stroke="#1c3a88" stroke-width="1.1"/>
<circle cx="451.7" cy="478.6" r="4.5" fill="#eef2fb" stroke="#55658f" stroke-width="1"/>
<rect x="450.1" y="477" width="3.2" height="3.2" fill="#1c3a88"/>
<circle cx="464.6" cy="478.6" r="4.5" fill="#eef2fb" stroke="#55658f" stroke-width="1"/>
<path d="M466.4 476.6 L463.4 478.6 L466.4 480.6 Z M462.6 476.6 V480.6" fill="#1c3a88" stroke="#1c3a88" stroke-width="0.6"/>
<circle cx="476.6" cy="478.6" r="4.5" fill="#eef2fb" stroke="#55658f" stroke-width="1"/>
<path d="M474.8 476.6 L477.8 478.6 L474.8 480.6 Z M478.6 476.6 V480.6" fill="#1c3a88" stroke="#1c3a88" stroke-width="0.6"/>
<rect x="485" y="474.2" width="15.6" height="8.8" rx="4.4" fill="#eef2fb" stroke="#55658f" stroke-width="1"/>
<path d="M494 474.4 V482.8" stroke="#2c3c6c" stroke-width="0.6"/>
<path d="M488 477.6 H489.4 L491 476.2 V481 L489.4 479.6 H488 Z" fill="#1c3a88"/>
<path d="M492 477.4 V479.8" stroke="#1c3a88" stroke-width="0.6"/>
<path d="M495.6 477.8 H498.6 L497.1 479.6 Z" fill="#1c3a88"/>
<path d="M504.2 471 V487" stroke="#5a6ea6" stroke-width="0.7"/>
<path d="M505 478.6 H511.6" stroke="#8a9cc8" stroke-width="0.6"/>
<circle cx="508.4" cy="474.8" r="1.5" fill="none" stroke="#1c3a88" stroke-width="0.8"/>
<path d="M506.6 483.6 V481.6 H510.4 M509 480.6 V483.4" stroke="#1c3a88" stroke-width="0.8" fill="none"/>
</svg>
<!-- TRAY -->
<div class="a" style="left:529px;top:469px;width:92px;height:19px;background:linear-gradient(#2aa0f0 0,#1490ea 3px,#0f8ae6 14px,#0e7cd2 19px);"></div>
<svg style="left:520px;top:469px" width="102" height="19" viewBox="520 469 102 19">
<circle cx="531" cy="478.5" r="4.9" fill="#4a8cf0" stroke="#e8f0ff" stroke-width="0.9"/>
<path d="M532.2 476 L529.6 478.5 L532.2 481" stroke="#fff" stroke-width="1.2" fill="none"/>
<!-- green circle -->
<circle cx="543.4" cy="478.4" r="4.6" fill="#18a838"/>
<path d="M545 476.4 Q542.4 475.2 541.4 477.6 Q541 480.4 543.6 481.2" stroke="#d8f8d8" stroke-width="1" fill="none"/>
<!-- doc w/ red -->
<rect x="549.4" y="473.6" width="6.4" height="9" fill="#e8eefa" stroke="#7a90c0" stroke-width="0.5"/>
<rect x="550" y="475" width="2.6" height="6" fill="#6a9ae0"/>
<circle cx="556.2" cy="479" r="2.9" fill="#e83030"/>
<path d="M555 479 H557.4" stroke="#fff" stroke-width="0.8"/>
<!-- msn person -->
<circle cx="564.4" cy="475.8" r="2.2" fill="#7ad04a"/>
<path d="M560.4 483 Q560.4 478.4 564.4 478.4 Q568.6 478.4 568.6 483 Z" fill="#5cc038"/>
<!-- navy square -->
<rect x="571" y="473.4" width="10" height="10" fill="#00007a"/>
<path d="M573.6 475 L575.4 477 L573.6 479 L575.4 481 L573.6 482.6 M578 476.4 V477.6 M578 479.6 V480.8 M580 476.4 V477.6 M580 479.6 V480.8" stroke="#f0e020" stroke-width="0.9" fill="none"/>
<!-- speaker -->
<circle cx="586.6" cy="477.4" r="3.6" fill="#8a8a8a" stroke="#4a4a4a" stroke-width="0.6"/>
<circle cx="586.2" cy="477" r="1.6" fill="#c8c8c8"/>
<path d="M588.2 482.6 L591.4 478.8" stroke="#8a6ad0" stroke-width="1"/>
</svg>
<div class="t" style="left:596.4px;top:474.4px;font-size:7px;color:#fff;line-height:8px;">12:40</div>
</body></html>
